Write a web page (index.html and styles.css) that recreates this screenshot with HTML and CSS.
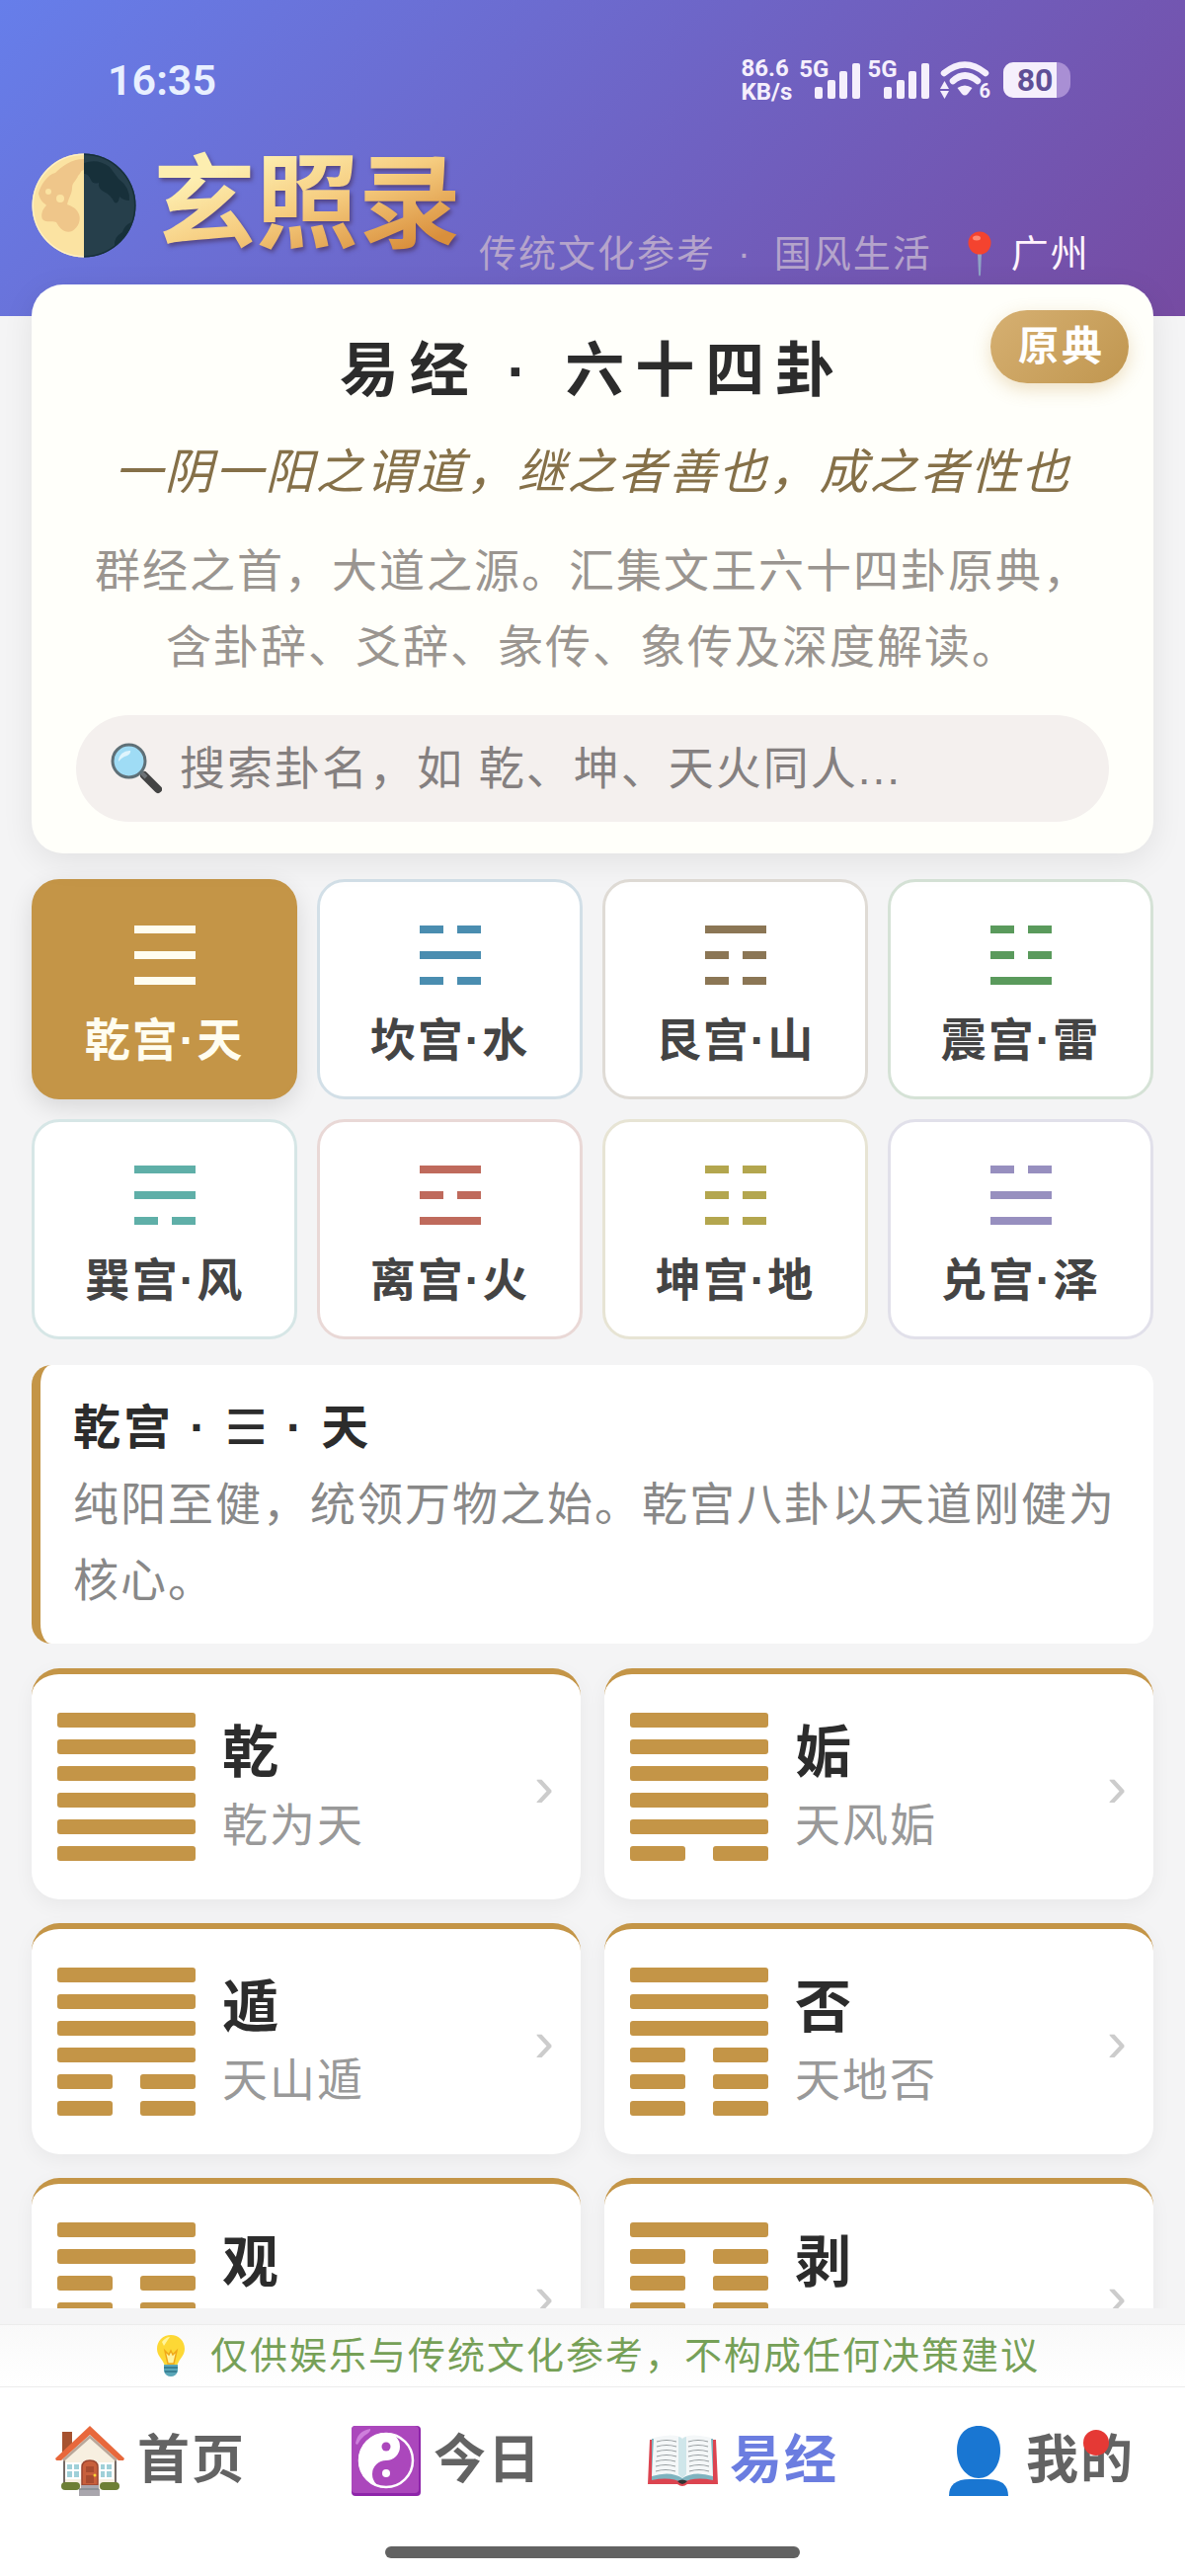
FILE: index.html
```html
<!DOCTYPE html>
<html lang="zh-CN">
<head>
<meta charset="utf-8">
<meta name="viewport" content="width=device-width, initial-scale=1">
<title>易经 · 六十四卦</title>
<link rel="stylesheet" href="styles.css">
</head>
<body>
<div class="content">
  <header class="header">
    <div class="status">
      <span class="time">16:35</span>
      <div class="indicators">
        <span class="speed">86.6<br>KB/s</span>
        <span class="cell"><span class="net">5G</span>
          <svg class="bars" viewBox="0 0 46 36" aria-hidden="true"><rect x="0" y="24" width="8" height="12" rx="2"/><rect x="13" y="17" width="8" height="19" rx="2"/><rect x="25" y="8" width="8" height="28" rx="2"/><rect x="38" y="0" width="8" height="36" rx="2"/></svg>
        </span>
        <span class="cell"><span class="net">5G</span>
          <svg class="bars" viewBox="0 0 46 36" aria-hidden="true"><rect x="0" y="24" width="8" height="12" rx="2"/><rect x="13" y="17" width="8" height="19" rx="2"/><rect x="25" y="8" width="8" height="28" rx="2"/><rect x="38" y="0" width="8" height="36" rx="2"/></svg>
        </span>
        <span class="wifi">
          <svg viewBox="0 0 50 38" aria-hidden="true"><path d="M4 12Q25-5 46 12" fill="none" stroke="#f5effc" stroke-width="6.500" stroke-linecap="round"/><path d="M13 20Q25 9 38 20" fill="none" stroke="#f5effc" stroke-width="6.500" stroke-linecap="round"/><path d="M17.500 27Q25 22 32.500 27L28 33Q25 36 22 33Z" fill="#f5effc"/><path d="M0 28L4.500 20 9 28ZM0 30H9L4.500 38Z" fill="#f5effc"/></svg>
          <span class="wifi-gen">6</span>
        </span>
        <span class="battery"><span class="level">80</span></span>
      </div>
    </div>
    <div class="brand">
      <svg class="moon" viewBox="0 0 106 106" aria-hidden="true">
        <defs><clipPath id="disc"><circle cx="53" cy="53" r="52.500"/></clipPath></defs>
        <g clip-path="url(#disc)">
          <rect width="53" height="106" fill="#fbe3a2"/>
          <rect x="53" width="53" height="106" fill="#263f4b"/>
          <path d="M53 6C40 6 30 14 24 20 16 22 9 32 7 41c2 9 7 10 8 12-4 4-6 9-4 14 4 4 10 1 14 3 3 6 9 12 16 9 7-4 9-12 7-17-2-6-7-8-12-10 2-8 5-11 5-17 0-5 5-8 6-12 4-4 2-5 6-6Z" fill="#efc68a"/>
          <circle cx="29" cy="46" r="4" fill="#fbe3a2"/><circle cx="17" cy="39" r="3" fill="#fbe3a2"/>
          <path d="M53 10q14-5 26 4l9 12q12 9 11 22-6 0-10-4-1 8-5 6-4-8-11-11-6-3-5-9-6 2-8-3-3-7-7-6Z" fill="#17303a"/>
          <path d="M101 70Q97 84 84 94q-1-9 8-14 2-7 9-10Z" fill="#17303a"/>
          <path d="M53 .5A52.500 52.500 0 0 0 53 105.500" fill="none" stroke="#fff0c4" stroke-width="3"/>
          <path d="M53 .5A52.500 52.500 0 0 1 53 105.500" fill="none" stroke="#17303a" stroke-width="3"/>
        </g>
      </svg>
      <strong class="logo">玄照录</strong>
      <span class="tagline"><span>传统文化参考</span><span>·</span><span>国风生活</span></span>
      <a class="city" href="#city">
        <svg viewBox="0 0 24 46" aria-hidden="true"><path d="M10 22h4l-1 22q-1 3-2 0Z" fill="#8ea3c4"/><circle cx="12" cy="12" r="11.500" fill="#f4432f"/><ellipse cx="9" cy="7" rx="4" ry="2.500" fill="#ff8a73"/></svg>
        <span>广州</span>
      </a>
    </div>
  </header>

  <main class="main">
    <section class="hero">
      <span class="badge">原典</span>
      <h1>易经 · 六十四卦</h1>
      <p class="quote">一阴一阳之谓道，继之者善也，成之者性也</p>
      <p class="intro">群经之首，大道之源。汇集文王六十四卦原典，<br>含卦辞、爻辞、彖传、象传及深度解读。</p>
      <label class="search">
        <svg viewBox="0 0 52 52" aria-label="搜索"><path d="M34 33L48 47" stroke="#444" stroke-width="8" stroke-linecap="round"/><path d="M30 29L36 35" stroke="#6d7276" stroke-width="4"/><circle cx="18.500" cy="18.500" r="16.500" fill="#9fdcf5" stroke="#5f7077" stroke-width="3"/><path d="M8 19A11 11 0 0 1 20 8Q21 12 14 14 10 16 8 19Z" fill="#dff5fd"/></svg>
        <input type="search" placeholder="搜索卦名，如 乾、坤、天火同人...">
      </label>
    </section>

    <nav class="palaces" aria-label="八宫">
      <button class="palace qian active" type="button"><svg viewBox="0 0 62 60" aria-hidden="true"><path d="M0 4H62M0 30H62M0 56H62"/></svg><span>乾宫·天</span></button>
      <button class="palace kan" type="button"><svg viewBox="0 0 62 60" aria-hidden="true"><path d="M0 4H24M38 4H62M0 30H62M0 56H24M38 56H62"/></svg><span>坎宫·水</span></button>
      <button class="palace gen" type="button"><svg viewBox="0 0 62 60" aria-hidden="true"><path d="M0 4H62M0 30H24M38 30H62M0 56H24M38 56H62"/></svg><span>艮宫·山</span></button>
      <button class="palace zhen" type="button"><svg viewBox="0 0 62 60" aria-hidden="true"><path d="M0 4H24M38 4H62M0 30H24M38 30H62M0 56H62"/></svg><span>震宫·雷</span></button>
      <button class="palace xun" type="button"><svg viewBox="0 0 62 60" aria-hidden="true"><path d="M0 4H62M0 30H62M0 56H24M38 56H62"/></svg><span>巽宫·风</span></button>
      <button class="palace li" type="button"><svg viewBox="0 0 62 60" aria-hidden="true"><path d="M0 4H62M0 30H24M38 30H62M0 56H62"/></svg><span>离宫·火</span></button>
      <button class="palace kun" type="button"><svg viewBox="0 0 62 60" aria-hidden="true"><path d="M0 4H24M38 4H62M0 30H24M38 30H62M0 56H24M38 56H62"/></svg><span>坤宫·地</span></button>
      <button class="palace dui" type="button"><svg viewBox="0 0 62 60" aria-hidden="true"><path d="M0 4H24M38 4H62M0 30H62M0 56H62"/></svg><span>兑宫·泽</span></button>
    </nav>

    <section class="about">
      <h2>乾宫 · <span class="trigram">☰</span> · 天</h2>
      <p>纯阳至健，统领万物之始。乾宫八卦以天道刚健为核心。</p>
    </section>

    <section class="grid">
      <a class="gua" href="#qian"><span class="lines"><i></i><i></i><i></i><i></i><i></i><i></i></span><span class="names"><b>乾</b><small>乾为天</small></span><span class="arrow">›</span></a>
      <a class="gua" href="#gou"><span class="lines"><i></i><i></i><i></i><i></i><i></i><i class="yin"></i></span><span class="names"><b>姤</b><small>天风姤</small></span><span class="arrow">›</span></a>
      <a class="gua" href="#dun"><span class="lines"><i></i><i></i><i></i><i></i><i class="yin"></i><i class="yin"></i></span><span class="names"><b>遁</b><small>天山遁</small></span><span class="arrow">›</span></a>
      <a class="gua" href="#pi"><span class="lines"><i></i><i></i><i></i><i class="yin"></i><i class="yin"></i><i class="yin"></i></span><span class="names"><b>否</b><small>天地否</small></span><span class="arrow">›</span></a>
      <a class="gua" href="#guan"><span class="lines"><i></i><i></i><i class="yin"></i><i class="yin"></i><i class="yin"></i><i class="yin"></i></span><span class="names"><b>观</b><small>风地观</small></span><span class="arrow">›</span></a>
      <a class="gua" href="#bo"><span class="lines"><i></i><i class="yin"></i><i class="yin"></i><i class="yin"></i><i class="yin"></i><i class="yin"></i></span><span class="names"><b>剥</b><small>山地剥</small></span><span class="arrow">›</span></a>
    </section>
  </main>
</div>

<p class="notice">
  <svg viewBox="0 0 28 44" aria-hidden="true"><path d="M14 1C6 1 0 7 0 15c0 6 4 9 6 13l2 4h12l2-4c2-4 6-7 6-13C28 7 22 1 14 1Z" fill="#fdd835"/><path d="M5 8q4-5 8-5-3 4-6 9Z" fill="#fff59d"/><path d="M8 17l4 4 2-4 2 4 4-4-3 13h-6Z" fill="#fff3a0" stroke="#f0a818" stroke-width="1.500"/><path d="M7 31h14v7q-2 5-7 5t-7-5Z" fill="#5aa6b8"/><path d="M7 34h14M8 38h12" stroke="#2f7488" stroke-width="1.500"/></svg>
  <span>仅供娱乐与传统文化参考，不构成任何决策建议</span>
</p>

<nav class="tabs" aria-label="主导航">
  <a href="#home"><svg viewBox="0 0 72 72" aria-hidden="true">
    <path d="M8 7h10v25H8Z" fill="#a6522f"/><path d="M36 6L62 32V65H10V32Z" fill="#f7efe0"/>
    <path d="M62 34V62M10 34V62" stroke="#4a3c38" stroke-width="1.500"/>
    <path d="M36 1L71 34l-1 2H65L36 10 7 36H2L1 34Z" fill="#e8683c"/><path d="M9 36L36 12 63 36" fill="none" stroke="#b9a79a" stroke-width="2.500"/>
    <rect x="12" y="39" width="14" height="15" fill="#9fd0d8" stroke="#fff" stroke-width="2"/><path d="M19 39v15M12 46h14" stroke="#fff" stroke-width="2"/>
    <rect x="46" y="39" width="13" height="15" fill="#9fd0d8" stroke="#fff" stroke-width="2"/><path d="M52 39v15M46 46h13" stroke="#fff" stroke-width="2"/>
    <path d="M28 61V43q0-7 8-7t8 7V61Z" fill="#c8603c" stroke="#9a4630" stroke-width="1.500"/><path d="M32 42h8v6h-8ZM32 51h8v8h-8Z" fill="#a84c30"/><circle cx="41" cy="51" r="1.500" fill="#fdd835"/>
    <rect x="7" y="58" width="19" height="8" rx="4" fill="#6d7f35"/><rect x="46" y="58" width="20" height="8" rx="4" fill="#6d7f35"/>
    <path d="M27 61h18v4h1v7H25v-7h2Z" fill="#a9a6ad"/><path d="M25 65h20" stroke="#858d92" stroke-width="1.500"/></svg><span>首页</span></a>
  <a href="#today"><svg viewBox="0 0 72 72" aria-hidden="true">
    <rect x="1" y="1" width="70" height="71" rx="4" fill="#8e24aa"/><rect x="1" y="1" width="68" height="68" rx="4" fill="#ab47bc"/><path d="M5 19Q7 6 20 4q1 3-6 7-5 4-7 9Z" fill="#ce7fdc"/>
    <circle cx="36" cy="36" r="27" fill="#ab47bc" stroke="#fff" stroke-width="2.500"/>
    <path d="M36 8A28 28 0 0 0 36 64A14 14 0 0 1 36 36A14 14 0 0 0 36 8Z" fill="#fff"/><circle cx="36" cy="22" r="4.500" fill="#ab47bc"/><circle cx="36" cy="49" r="4" fill="#fff"/></svg><span>今日</span></a>
  <a class="current" href="#yijing"><svg viewBox="0 0 72 72" aria-hidden="true">
    <path d="M3 15H70L72 60H41q-5 4-10 0H1Z" fill="#dc4450"/><path d="M5 14V56q20-4 31 3 11-7 31-3V14" fill="#7fb3bf"/>
    <path d="M7 13Q27 8 36 13V54Q24 46 5 52Z" fill="#f4f7f8"/><path d="M65 13Q45 8 36 13V54Q48 46 67 52Z" fill="#f4f7f8"/><path d="M32 12q4 1 4 3 0-2 4-3V50l-4 4-4-4Z" fill="#cfe6ea"/>
    <path d="M10 17q10-3 20 0M10 22q10-3 20 0M10 27q10-3 20 0M10 32q10-3 20 0M9 37q10-3 20 0M9 42q10-3 20 0M9 47q10-3 20 0M42 17q10-3 20 0M42 22q10-3 20 0M42 27q10-3 20 0M42 32q10-3 20 0M43 37q10-3 20 0M43 42q10-3 20 0M43 47q10-3 20 0" fill="none" stroke="#939a9d" stroke-width="1.200"/>
    <path d="M31 57q5-3 10 0-5 6-10 0Z" fill="#333"/></svg><span>易经</span></a>
  <a href="#me"><svg viewBox="0 0 72 72" aria-hidden="true"><path d="M36 1C49 1 58 10 58 26 58 42 48 54 36 54S14 42 14 26C14 10 23 1 36 1Z" fill="#1976d2"/><path d="M6 72q0-17 21-17h18q21 0 21 17Z" fill="#1976d2"/></svg><span class="mine">我的<i class="dot"></i></span></a>
</nav>
<div class="homebar"></div>
</body>
</html>
```
FILE: styles.css
```css
* { box-sizing: border-box; }

body {
  margin: 0;
  height: 100vh;
  display: flex;
  flex-direction: column;
  background: #f4f4f5;
  color: #2c2c2c;
  font-family: "Liberation Sans", "Noto Sans CJK SC", sans-serif;
  font-size: 46px;
  letter-spacing: 2px;
}

h1, h2, p { margin: 0; }
a { color: inherit; text-decoration: none; }
button, input { font: inherit; letter-spacing: inherit; }
svg { display: block; flex: none; }

.content {
  flex: 1;
  min-height: 0;
  overflow: hidden;
  margin-bottom: 16px;
}

/* Header */
.header {
  padding: 59px 32px 34px;
  background: linear-gradient(135deg, #667eea 0%, #764ba2 100%);
}

.status {
  display: flex;
  justify-content: space-between;
  align-items: center;
  height: 44px;
  margin-bottom: 26px;
  padding: 0 84px 0 77px;
  font-family: Roboto, sans-serif;
  font-weight: 700;
  letter-spacing: 0;
  color: #f5effc;
}

.time { font-size: 43px; font-weight: 600; line-height: 44px; color: #e8f0ff; }
.indicators { display: flex; align-items: center; gap: 7px; }
.speed { font-size: 24px; line-height: 24px; }
.cell { display: flex; align-items: flex-start; }
.net { font-size: 24px; line-height: 16px; margin-right: -14px; }
.bars { width: 46px; height: 36px; margin-top: 2px; fill: #f5effc; }
.wifi { display: flex; align-items: flex-end; margin-left: 4px; }
.wifi svg { width: 50px; height: 38px; }
.wifi-gen { font-size: 20px; line-height: 16px; margin-left: -10px; }

.battery {
  width: 68px;
  height: 36px;
  margin-left: 6px;
  border-radius: 10px 14px 14px 10px;
  background: linear-gradient(90deg, #f5effc 80%, #a98fd4 80%);
  color: #5f4f96;
}
.level { display: block; width: 64px; text-align: center; font-size: 32px; line-height: 36px; }

.brand { display: flex; align-items: center; height: 157px; }
.moon { width: 106px; height: 106px; margin-right: 17px; }

.logo {
  font-size: 104px;
  line-height: 157px;
  font-weight: 700;
  letter-spacing: 0;
  background: linear-gradient(160deg, #fdeeb0 25%, #f6cd80 50%, #d98f3c 80%);
  -webkit-background-clip: text;
  background-clip: text;
  color: transparent;
  filter: drop-shadow(2px 3px 2px rgba(60, 30, 60, 0.5));
}

.tagline, .city { display: flex; align-self: flex-end; font-size: 38px; line-height: 58px; white-space: nowrap; }
.tagline { gap: 22px; margin-left: 18px; color: #b5a4cb; }
.city { align-items: center; gap: 20px; margin-left: 36px; color: #fff3fc; }
.city svg { width: 24px; height: 46px; }

/* Introduction card */
.main { padding: 0 32px; }

.hero {
  position: relative;
  margin-top: -32px;
  padding: 46px 45px 32px;
  border-radius: 32px;
  background: #fffffa;
  box-shadow: 0 8px 32px rgba(0, 0, 0, 0.08);
  text-align: center;
}

.badge {
  position: absolute;
  top: 26px;
  right: 25px;
  padding: 0 24px 0 28px;
  border-radius: 37px;
  background: linear-gradient(135deg, #d6b072, #c0964f);
  box-shadow: 0 6px 18px rgba(196, 149, 71, 0.3);
  color: #fff;
  font-size: 41px;
  font-weight: 700;
  line-height: 74px;
  letter-spacing: 3px;
}

.hero h1 { font-size: 60px; font-weight: 700; line-height: 84px; letter-spacing: 11px; }
.quote { margin-top: 24px; color: #857048; font-size: 49px; font-style: italic; line-height: 72px; white-space: nowrap; }
.intro { margin-top: 26px; color: #9a9590; line-height: 77px; white-space: nowrap; }

.search {
  display: flex;
  align-items: center;
  gap: 18px;
  height: 108px;
  margin-top: 30px;
  padding: 0 35px;
  border-radius: 54px;
  background: #f4f0ee;
}
.search svg { width: 52px; height: 52px; }
.search input {
  flex: 1;
  min-width: 0;
  height: 72px;
  padding: 0;
  border: 0;
  outline: 0;
  background: none;
  appearance: none;
  color: #2c2c2c;
}
.search input::placeholder { color: #858080; opacity: 1; }

/* Palace tiles */
.palaces {
  display: grid;
  grid-template-columns: repeat(4, 1fr);
  gap: 20px;
  margin-top: 26px;
}

.palace {
  --tone: #c49547;
  display: flex;
  flex-direction: column;
  align-items: center;
  gap: 20px;
  padding: 44px 0 21px;
  border: 3px solid color-mix(in srgb, var(--tone) 20%, #f4f4f5);
  border-radius: 28px;
  background: #fff;
  color: #444;
  font-weight: 700;
  line-height: 72px;
}
.palace svg { width: 62px; height: 60px; fill: none; stroke: var(--tone); stroke-width: 8px; }
.palace.active {
  border-color: var(--tone);
  background: var(--tone);
  color: #fffdf0;
  box-shadow: 0 8px 24px rgba(0, 0, 0, 0.12);
}
.palace.active svg { stroke: #fffdf0; }
.kan { --tone: #4a8db0; }
.gen { --tone: #8b7655; }
.zhen { --tone: #5a9a5c; }
.xun { --tone: #5fafa8; }
.li { --tone: #bf6a5c; }
.kun { --tone: #b3a64e; }
.dui { --tone: #978fbf; }

/* Palace description */
.about {
  margin-top: 26px;
  padding: 27px 34px 25px 33px;
  border-left: 9px solid #c49547;
  border-radius: 20px;
  background: #fff;
}
.about h2 { margin-bottom: 2px; font-size: 48px; line-height: 74px; font-weight: 700; letter-spacing: 3px; }
.about p { color: #888; line-height: 77px; }
.trigram { font-family: "DejaVu Sans", sans-serif; font-weight: 400; line-height: 1; }

/* Hexagram cards */
.grid {
  display: grid;
  grid-template-columns: repeat(2, 1fr);
  gap: 24px;
  margin-top: 25px;
}

.gua {
  display: flex;
  align-items: center;
  padding: 39px 27px 39px 26px;
  border-top: 6px solid #c49547;
  border-radius: 28px;
  background: #fff;
  box-shadow: 0 6px 20px rgba(0, 0, 0, 0.05);
}

.lines { display: flex; flex-direction: column; gap: 12px; width: 140px; }
.lines i { display: flex; justify-content: space-between; height: 15px; border-radius: 3px; background: #c49547; }
.lines .yin { background: none; }
.yin::before, .yin::after { content: ""; width: 56px; border-radius: 3px; background: #c49547; }

.names { display: flex; flex-direction: column; flex: 1; margin-left: 27px; padding-top: 2px; }
.names b { font-size: 57px; font-weight: 700; line-height: 76px; }
.names small { color: #999; font-size: 46px; line-height: 72px; }
.arrow { color: #ccc; font-size: 60px; line-height: 72px; letter-spacing: 0; }

/* Notice and tab bar */
.notice {
  display: flex;
  justify-content: center;
  align-items: center;
  gap: 26px;
  height: 64px;
  padding-left: 12px;
  border: 1px solid #ececec;
  border-width: 1px 0;
  background: linear-gradient(#f9f9f9, #fff);
  color: #76a057;
  font-size: 38px;
  line-height: 62px;
}
.notice svg { width: 28px; height: 44px; }

.tabs {
  display: grid;
  grid-template-columns: repeat(4, 1fr);
  padding: 35px 0 48px;
  background: #fff;
  color: #636363;
  font-size: 53px;
  font-weight: 700;
  line-height: 78px;
}
.tabs a { display: flex; justify-content: center; align-items: center; gap: 12px; padding-left: 4px; }
.tabs svg { width: 72px; height: 72px; }
.tabs .current { color: #6b7de0; }
.mine { position: relative; }
.dot { position: absolute; top: 8px; right: 26px; width: 26px; height: 26px; border-radius: 50%; background: #e53935; }

.homebar {
  display: flex;
  justify-content: center;
  height: 30px;
  background: #fff;
}
.homebar::before {
  content: "";
  width: 35%;
  height: 12px;
  border-radius: 6px;
  background: #626262;
}
```
